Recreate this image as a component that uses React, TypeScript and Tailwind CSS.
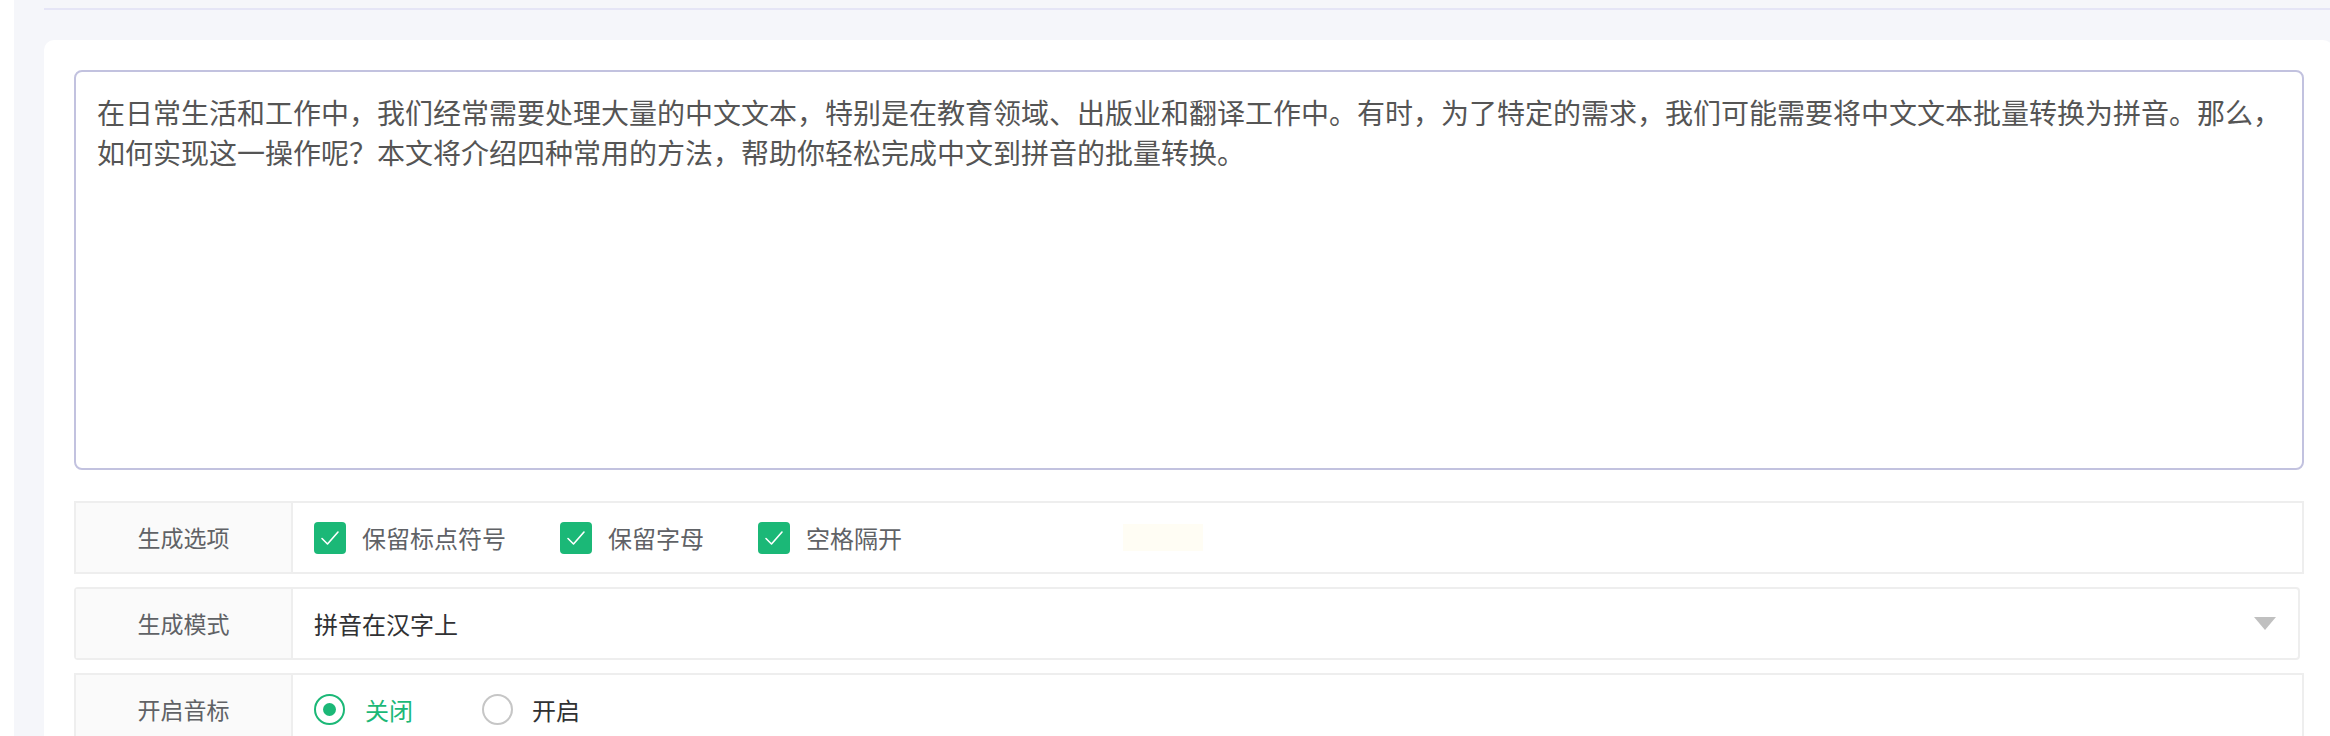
import React from "react";

const font = { fontFamily: '"Noto Sans CJK SC", "Noto Sans", sans-serif' };

function Check() {
  return (
    <span className="flex h-[32px] w-[32px] items-center justify-center rounded-[4px] bg-[#1bb877]">
      <svg width="20" height="16" viewBox="0 0 20 16" fill="none">
        <path d="M2 8.5 L7.5 14 L18 2" stroke="#ffffff" strokeWidth="1.6" strokeLinecap="round" strokeLinejoin="round" />
      </svg>
    </span>
  );
}

function CheckItem({ label }: { label: string }) {
  return (
    <div className="flex items-center gap-[16px]">
      <Check />
      <span className="text-[24px] text-[#606266]">{label}</span>
    </div>
  );
}

function Row({ label, children, select }: { label: string; children: React.ReactNode; select?: boolean }) {
  return (
    <div className={`flex h-[73px] border-2 border-[#eeeeee] ${select ? "mr-[4px] rounded-[4px]" : ""}`}>
      <div className="flex w-[217px] shrink-0 items-center justify-center border-r-2 border-[#eeeeee] bg-[#fafafa] text-[23px] text-[#606266]">
        {label}
      </div>
      <div className="flex flex-1 items-center pl-[21px] pr-[20px]">{children}</div>
    </div>
  );
}

export default function App() {
  return (
    <div className="flex min-h-[736px] w-full bg-white" style={font}>
      <div className="w-[14px] shrink-0 bg-white" />
      <div className="flex flex-1 flex-col bg-[#f5f6fa] pl-[30px]">
        <div className="mt-[8px] h-[2px] bg-[#e5e5f6]" />
        <div className="mt-[30px] flex flex-1 flex-col rounded-tl-[10px] rounded-tr-[10px] bg-white pl-[30px] pr-[29px] pt-[30px]">
          <div className="h-[400px] rounded-[8px] border-2 border-[#c2c2df] px-[21px] pt-[20px] text-[28px] leading-[40px] text-[#555555]">
            <div className="whitespace-nowrap">在日常生活和工作中，我们经常需要处理大量的中文文本，特别是在教育领域、出版业和翻译工作中。有时，为了特定的需求，我们可能需要将中文文本批量转换为拼音。那么，</div>
            <div className="whitespace-nowrap">如何实现这一操作呢？本文将介绍四种常用的方法，帮助你轻松完成中文到拼音的批量转换。</div>
          </div>
          <div className="mt-[31px] flex flex-col gap-[13px]">
            <Row label="生成选项">
              <div className="flex items-center gap-[54px]">
                <CheckItem label="保留标点符号" />
                <CheckItem label="保留字母" />
                <CheckItem label="空格隔开" />
              </div>
              <div className="ml-[221px] h-[27px] w-[80px] bg-[#fffdf4]" />
            </Row>
            <Row label="生成模式" select>
              <span className="flex-1 text-[24px] text-[#303133]">拼音在汉字上</span>
              <svg width="22" height="13" viewBox="0 0 22 13" className="mr-[2px]">
                <path d="M0 0 L22 0 L11 13 Z" fill="#c0c0c0" />
              </svg>
            </Row>
            <Row label="开启音标">
              <div className="flex items-center gap-[20px]">
                <span className="flex h-[31px] w-[31px] items-center justify-center rounded-full border-2 border-[#1bb877]">
                  <span className="h-[13px] w-[13px] rounded-full bg-[#1bb877]" />
                </span>
                <span className="text-[24px] text-[#1bb877]">关闭</span>
              </div>
              <div className="ml-[69px] flex items-center gap-[19px]">
                <span className="h-[31px] w-[31px] rounded-full border-2 border-[#c6c6c6]" />
                <span className="text-[24px] text-[#303133]">开启</span>
              </div>
            </Row>
          </div>
        </div>
      </div>
    </div>
  );
}
